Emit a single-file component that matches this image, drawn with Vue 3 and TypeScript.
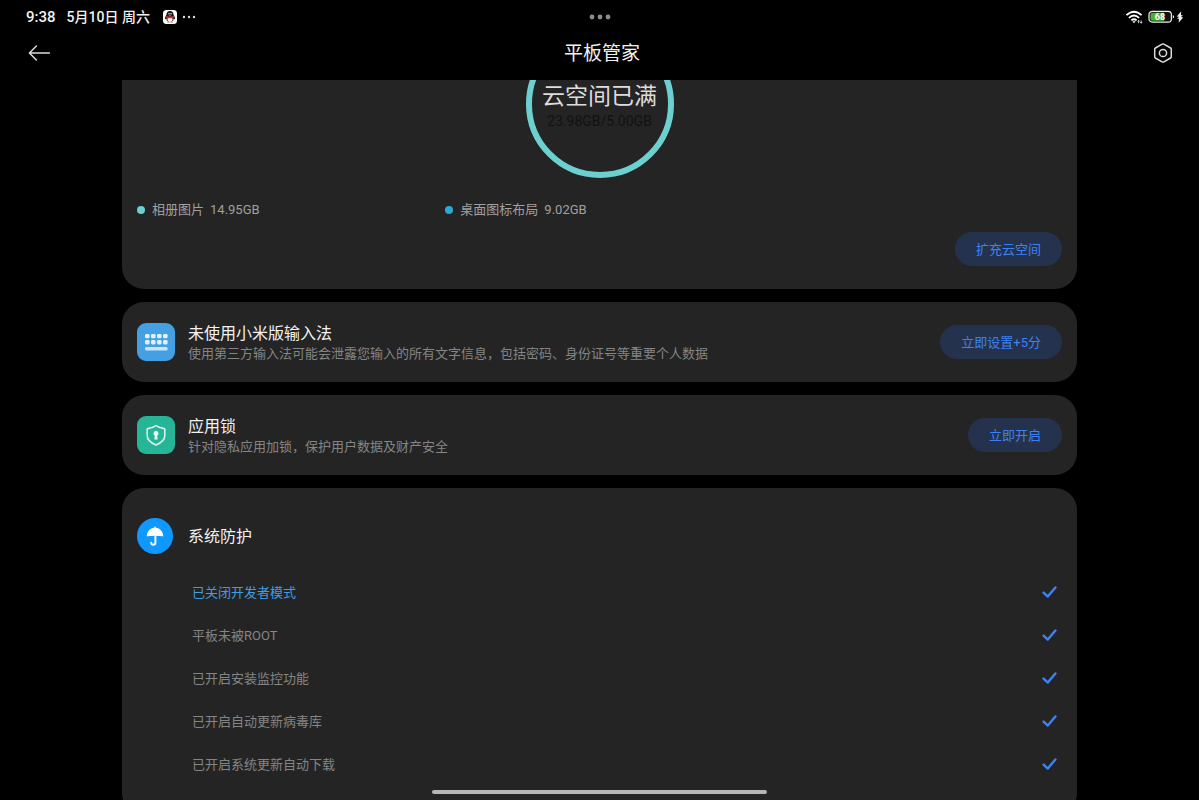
<script setup lang="ts">
interface Usage {
  label: string
  size: string
  tone: string
}

interface Check {
  text: string
  active: boolean
}

const usages: Usage[] = [
  { label: '相册图片', size: '14.95GB', tone: 'teal' },
  { label: '桌面图标布局', size: '9.02GB', tone: 'blue' },
]

const checks: Check[] = [
  { text: '已关闭开发者模式', active: true },
  { text: '平板未被ROOT', active: false },
  { text: '已开启安装监控功能', active: false },
  { text: '已开启自动更新病毒库', active: false },
  { text: '已开启系统更新自动下载', active: false },
]
</script>

<template>
  <div class="screen">
    <div class="status">
      <div class="status-left">
        <span class="time">9:38</span>
        <span class="date">5月10日 周六</span>
        <svg class="qq" viewBox="0 0 14 14" aria-hidden="true">
          <rect width="14" height="14" rx="3.5" fill="#fff" />
          <path d="M7 1.1C4.7 1.1 3.5 2.7 3.5 4.8C2.6 6 1.8 7.7 2.1 9C2.4 9.5 2.9 9 3.3 8.5C3.6 11 4.9 12.3 7 12.3S10.4 11 10.7 8.5C11.1 9 11.6 9.5 11.9 9C12.2 7.7 11.4 6 10.5 4.8C10.5 2.7 9.3 1.1 7 1.1Z" fill="#1b1518" />
          <ellipse cx="7" cy="9.3" rx="2.5" ry="2.6" fill="#fff" />
          <path d="M3.2 5.7Q7 7.5 10.8 5.7L11.2 7.4Q7 9.2 2.8 7.4Z" fill="#d8262e" />
          <circle cx="6" cy="3.8" r=".7" fill="#fff" />
          <circle cx="8" cy="3.8" r=".7" fill="#fff" />
          <path d="M5.4 5.2H8.6L7 6Z" fill="#f0a020" />
          <path d="M3.8 12.6Q5 11.2 6.6 12.6ZM7.4 12.6Q9 11.2 10.2 12.6Z" fill="#c83a2e" />
        </svg>
        <svg class="ellipsis" viewBox="0 0 14 4" aria-hidden="true">
          <circle cx="2" cy="2" r="1.2" />
          <circle cx="7" cy="2" r="1.2" />
          <circle cx="12" cy="2" r="1.2" />
        </svg>
      </div>
      <button class="plain handle" type="button" aria-label="窗口菜单">
        <svg width="22" height="6" viewBox="0 0 22 6" fill="#8c8c8c">
          <circle cx="3" cy="3" r="2.4" />
          <circle cx="11" cy="3" r="2.4" />
          <circle cx="19" cy="3" r="2.4" />
        </svg>
      </button>
      <div class="status-right">
        <svg width="18" height="14" viewBox="0 0 18 14" fill="none" stroke="#fff" stroke-width="1.8" aria-hidden="true">
          <path d="M1.4 5.2Q9 -1.8 16.6 5.2" />
          <path d="M3.9 7.9Q9 3.2 14.1 7.9" />
          <path d="M6.4 10.4Q9 8.1 11.6 10.4" />
          <path d="M7.3 11.2L9 13.2L10.7 11.2Z" fill="#fff" stroke="none" />
          <path d="M13.6 10.4V13.2M12.6 11.5L13.6 10.4L14.6 11.5M16.2 10.4V13.2M15.2 12.1L16.2 13.2L17.2 12.1" stroke-width=".8" />
        </svg>
        <div class="battery">
          <svg width="27" height="14" viewBox="0 0 27 14" aria-hidden="true">
            <rect x="1" y="1.3" width="22.4" height="10.8" rx="3.2" fill="#111" stroke="#eee" stroke-width="1.2" />
            <path d="M4.6 2.7H16V10.7H4.6Q2.4 10.7 2.4 8.5V4.9Q2.4 2.7 4.6 2.7Z" fill="#4cae32" />
            <path d="M24.8 5V8.6Q26.2 8 26.2 6.8T24.8 5Z" fill="#eee" />
          </svg>
          <span class="level">68</span>
        </div>
        <svg width="8" height="14" viewBox="0 0 8 14" aria-hidden="true">
          <path d="M5.2 1.2L.8 6.4L3.2 7L1 8.6L3 8.9L2.6 12.8L7.2 7.6L4.9 7L7 5.4L4.9 5.1Z" fill="#eee" />
        </svg>
      </div>
    </div>

    <header class="bar">
      <button class="plain" type="button" aria-label="返回">
        <svg width="24" height="20" viewBox="0 0 24 20" fill="none" stroke="#dcdcdc" stroke-width="1.5" stroke-linecap="round" stroke-linejoin="round">
          <path d="M21.4 10H1.4M8.4 3L1.4 10L8.4 17" />
        </svg>
      </button>
      <h1>平板管家</h1>
      <button class="plain" type="button" aria-label="设置">
        <svg width="22" height="22" viewBox="0 0 22 22" fill="none" stroke="#dcdcdc" stroke-width="1.5" stroke-linejoin="round">
          <path d="M11 1.9Q11.4 1.9 11.9 2.2L18.6 6Q19.3 6.4 19.3 7.2V14.8Q19.3 15.6 18.6 16L11.9 19.8Q11 20.3 10.1 19.8L3.4 16Q2.7 15.6 2.7 14.8V7.2Q2.7 6.4 3.4 6L10.1 2.2Q10.6 1.9 11 1.9Z" />
          <circle cx="11" cy="11" r="3.6" />
        </svg>
      </button>
    </header>

    <main class="content">
      <section class="card cloud">
        <div class="ring">
          <svg viewBox="0 0 148 148" aria-hidden="true">
            <circle cx="74" cy="74" r="71" fill="none" stroke="#6ccfd0" stroke-width="6" />
          </svg>
          <strong>云空间已满</strong>
          <span>23.98GB/5.00GB</span>
        </div>
        <ul class="legend">
          <li v-for="item in usages" :key="item.label">
            <i :class="item.tone"></i>
            <span>{{ item.label }}</span>
            <span class="size">{{ item.size }}</span>
          </li>
        </ul>
        <button class="pill" type="button">扩充云空间</button>
      </section>

      <section class="card tip">
        <svg class="tile" viewBox="0 0 38 38" aria-hidden="true">
          <rect width="38" height="38" rx="9" fill="#459fe3" />
          <g fill="#e2f1fc">
            <template v-for="row in 2" :key="row">
              <rect v-for="col in 4" :key="col" :x="2 + col * 6" :y="4.7 + row * 6.2" width="4.6" height="4.4" rx="1.4" />
            </template>
            <rect x="8" y="24" width="22.6" height="3.6" rx="1.5" opacity=".85" />
          </g>
        </svg>
        <div class="words">
          <h2>未使用小米版输入法</h2>
          <p>使用第三方输入法可能会泄露您输入的所有文字信息，包括密码、身份证号等重要个人数据</p>
        </div>
        <button class="pill" type="button">立即设置+5分</button>
      </section>

      <section class="card tip">
        <svg class="tile" viewBox="0 0 38 38" aria-hidden="true">
          <rect width="38" height="38" rx="9" fill="#26b596" />
          <path d="M19 9.6Q22.5 12 27 12.6Q27.8 12.8 27.8 13.6V19.5C27.8 24 24 27 19 29C14 27 10.2 24 10.2 19.5V13.6Q10.2 12.8 11 12.6Q15.5 12 19 9.6Z" fill="none" stroke="#d5f5ec" stroke-width="1.6" stroke-linejoin="round" />
          <path d="M19 14.8A2.6 2.6 0 0 1 20.3 19.6L20.6 23.4H17.4L17.7 19.6A2.6 2.6 0 0 1 19 14.8Z" fill="#e6faf5" />
        </svg>
        <div class="words">
          <h2>应用锁</h2>
          <p>针对隐私应用加锁，保护用户数据及财产安全</p>
        </div>
        <button class="pill" type="button">立即开启</button>
      </section>

      <section class="card system">
        <div class="system-head">
          <svg width="36" height="36" viewBox="0 0 36 36" aria-hidden="true">
            <circle cx="18" cy="18" r="18" fill="#0f98ff" />
            <path d="M18 8.6Q18.8 8.6 18.8 9.8C23 10.2 26 13.6 26.3 18.2Q18 17.4 9.7 18.2C10 13.6 13 10.2 17.2 9.8Q17.2 8.6 18 8.6Z" fill="#fff" />
            <path d="M18.4 16.5V24.4Q18.4 26.7 16.4 26.7T14.2 24.8" fill="none" stroke="#fff" stroke-width="1.9" stroke-linecap="round" />
          </svg>
          <h2>系统防护</h2>
        </div>
        <ul class="checks">
          <li v-for="check in checks" :key="check.text" :class="{ active: check.active }">
            <span>{{ check.text }}</span>
            <svg width="16" height="14" viewBox="0 0 16 14" role="img" aria-label="已完成">
              <path d="M2.6 7.6L6.8 11.6L14.4 2.4" fill="none" stroke="#3f82f4" stroke-width="2.4" stroke-linecap="round" stroke-linejoin="round" />
            </svg>
          </li>
        </ul>
      </section>
    </main>
    <div class="home"></div>
  </div>
</template>

<style>
body {
  background: #000;
}
</style>

<style scoped>
.screen {
  position: relative;
  display: flex;
  flex-direction: column;
  height: 100vh;
  overflow: hidden;
  background: #000;
  color: #f2f2f2;
  font-family: Roboto, "Noto Sans CJK SC", sans-serif;
  font-size: 13px;
}

h1,
h2,
p,
ul {
  margin: 0;
  padding: 0;
  list-style: none;
  font-weight: 400;
}

svg {
  display: block;
  flex: none;
}

.plain {
  display: block;
  padding: 0;
  border: 0;
  background: none;
}

.status {
  display: grid;
  grid-template-columns: 1fr auto 1fr;
  align-items: center;
  height: 34px;
  flex: none;
  padding: 0 15px 0 26px;
}

.status-left,
.status-right {
  display: flex;
  align-items: center;
  line-height: 20px;
  white-space: nowrap;
}

.status-left {
  font-weight: 500;
}

.time {
  margin-right: 11px;
  font-size: 15px;
}

.date {
  margin-right: 13px;
  font-size: 14px;
}

.qq {
  width: 14px;
  height: 14px;
  margin-right: 5px;
}

.ellipsis {
  width: 14px;
  height: 4px;
  fill: #ddd;
}

.handle {
  margin-right: 11px;
}

.status-right {
  justify-content: flex-end;
  gap: 5px;
}

.status-right > :last-child {
  margin-left: -4px;
}

.battery {
  position: relative;
}

.level {
  position: absolute;
  top: 0;
  left: 0;
  width: 24px;
  color: #fff;
  font-size: 9px;
  font-weight: 700;
  line-height: 14px;
  text-align: center;
}

.bar {
  display: flex;
  align-items: center;
  justify-content: space-between;
  height: 38px;
  flex: none;
  margin-bottom: 8px;
  padding: 0 25px 0 28px;
}

h1 {
  padding-top: 2px;
  font-size: 19px;
  line-height: 28px;
}

.content {
  display: flex;
  flex: 1;
  flex-direction: column;
  gap: 13px;
  min-height: 0;
  padding: 0 122px;
  overflow: hidden;
}

.card {
  flex: none;
  border-radius: 22px;
  background: #242424;
}

.cloud {
  display: flex;
  flex-direction: column;
  padding: 0 15px 23px;
  border-radius: 0 0 22px 22px;
  overflow: hidden;
}

.ring {
  position: relative;
  display: flex;
  flex-direction: column;
  align-items: center;
  justify-content: center;
  align-self: center;
  box-sizing: border-box;
  width: 148px;
  height: 148px;
  margin-top: -50px;
  padding-top: 4px;
}

.ring svg {
  position: absolute;
  inset: 0;
}

.ring strong {
  color: #dcdcdc;
  font-size: 23px;
  font-weight: 400;
  line-height: 30px;
}

.ring span {
  color: #121212;
  font-size: 14px;
  line-height: 18px;
}

.legend {
  display: grid;
  grid-template-columns: repeat(3, 1fr);
  margin: 22px 0 12px;
  color: #a0a0a0;
  line-height: 20px;
}

.legend li {
  display: flex;
  align-items: center;
}

.legend i {
  width: 8px;
  height: 8px;
  margin-right: 7px;
  border-radius: 50%;
}

.size {
  margin-left: 6px;
}

.teal {
  background: #6ccfd0;
}

.blue {
  background: #2ea6d8;
}

.pill {
  flex: none;
  align-self: flex-end;
  height: 34px;
  padding: 0 21px 2px;
  border: 0;
  border-radius: 17px;
  background: #25324d;
  color: #3d82f2;
  font: inherit;
}

.tip {
  display: flex;
  align-items: center;
  padding: 18px 15px;
}

.tip .pill {
  align-self: center;
}

.tile {
  width: 38px;
  height: 38px;
  margin-right: 13px;
}

.words {
  flex: 1;
  min-width: 0;
  padding-top: 4px;
}

h2 {
  font-size: 16px;
  line-height: 20px;
}

.words p {
  color: #858585;
  line-height: 20px;
}

.system {
  padding: 30px 20px 30px 15px;
}

.system-head {
  display: flex;
  align-items: center;
  gap: 15px;
}

.system-head h2 {
  padding-top: 2px;
}

.checks {
  margin-top: 16px;
  padding-left: 55px;
  color: #858585;
}

.checks li {
  display: flex;
  align-items: center;
  justify-content: space-between;
  height: 43px;
}

.checks .active {
  color: #3d9ee2;
}

.home {
  position: absolute;
  bottom: 6px;
  left: 36%;
  width: 28%;
  height: 4px;
  border-radius: 2px;
  background: #b6b6b6;
}
</style>
